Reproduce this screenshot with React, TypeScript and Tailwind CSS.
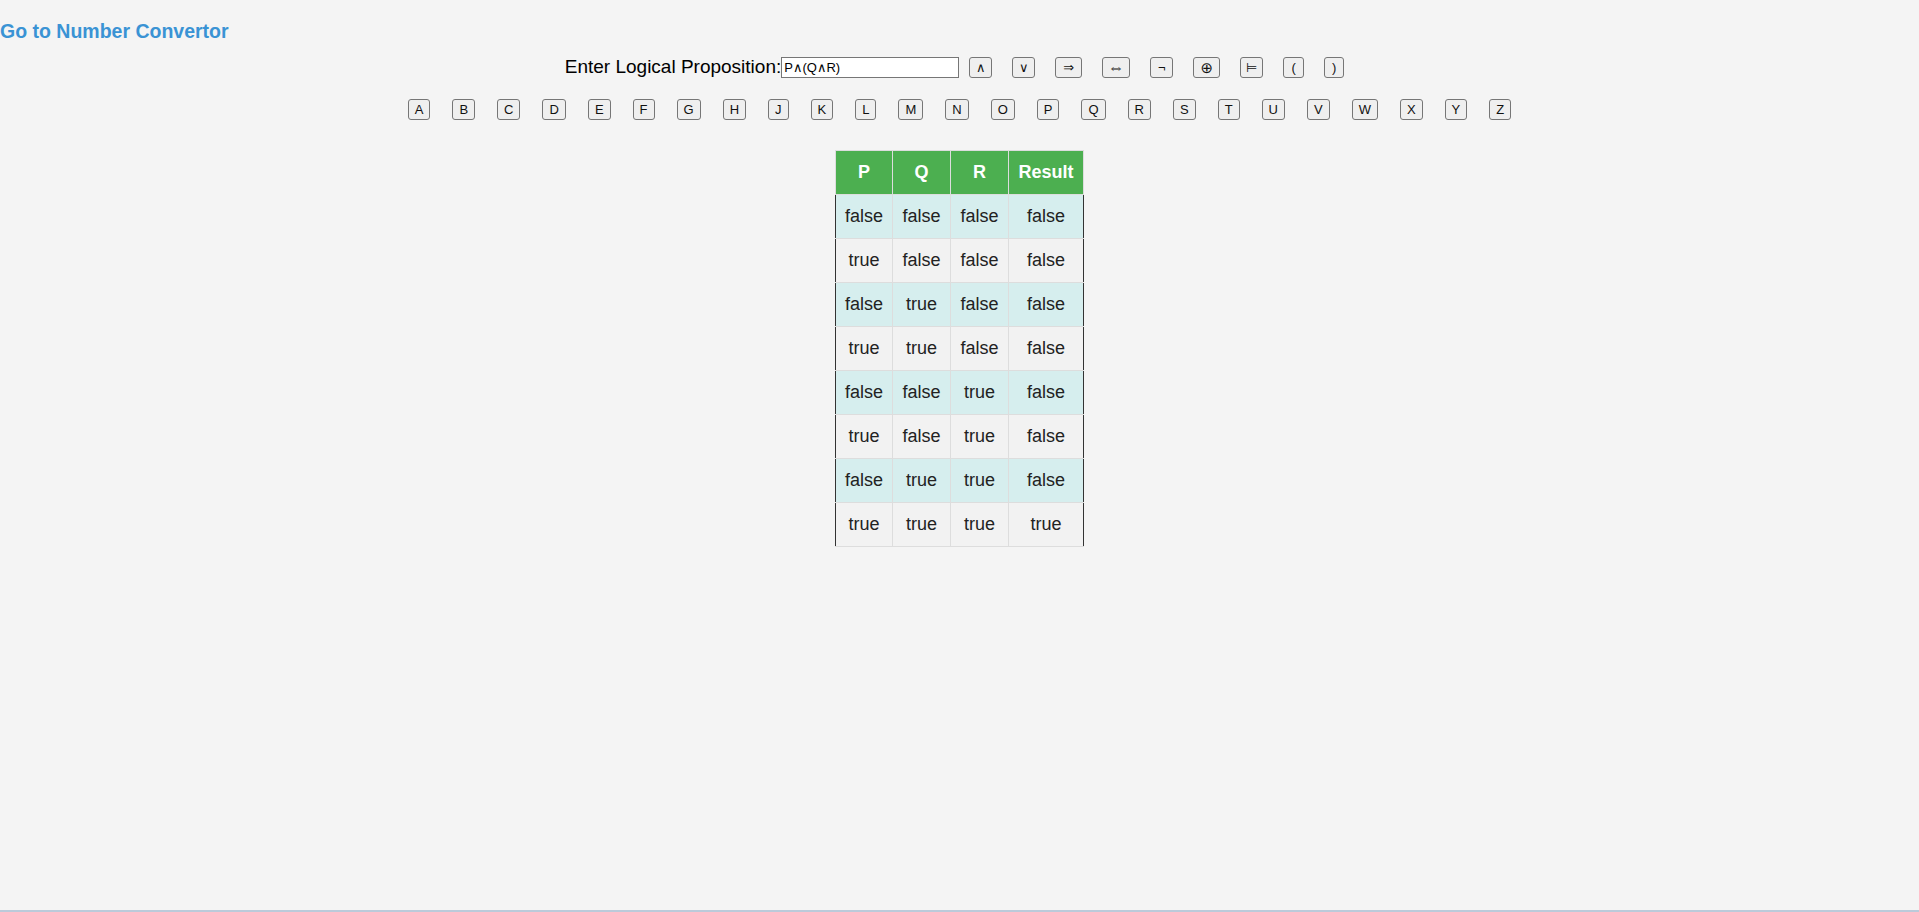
import React from 'react';

// symbol keys with the widths they take in the original
const operators: { sym: string; w: string }[] = [
    { sym: '∧', w: 'w-[23px]' },
    { sym: '∨', w: 'w-[23px]' },
    { sym: '⇒', w: 'w-[27px]' },
    { sym: '⇔', w: 'w-[28px] text-[17px]' },
    { sym: '¬', w: 'w-[23px]' },
    { sym: '⊕', w: 'w-[27px] text-[15px]' },
    { sym: '⊨', w: 'w-[23px]' },
    { sym: '(', w: 'w-[21px]' },
    { sym: ')', w: 'w-[20px]' },
];
const letters = 'ABCDEFGHJKLMNOPQRSTUVWXYZ'.split('');

const rows: boolean[][] = [
    [false, false, false, false],
    [true, false, false, false],
    [false, true, false, false],
    [true, true, false, false],
    [false, false, true, false],
    [true, false, true, false],
    [false, true, true, false],
    [true, true, true, true],
];

function KeyButton({ label, className }: { label: string; className: string }) {
    return (
        <button
            type="button"
            className={`h-[21px] flex items-center justify-center border border-[#767676] rounded-[3px] bg-[#efefef] text-[13px] leading-none text-[#111] font-['Liberation_Sans','DejaVu_Sans',sans-serif] ${className}`}
        >
            {label}
        </button>
    );
}

export default function App() {
    return (
        <div className="h-[912px] flex flex-col bg-[#f4f4f4] font-['Liberation_Sans',Arial,sans-serif] text-[#222]">
            <div className="pt-[20px]">
                <a href="#" className="text-[19.5px] leading-[22px] font-bold text-[#3a93d4] no-underline">
                    Go to Number Convertor
                </a>
            </div>

            {/* proposition input + operator keys */}
            <div className="mt-[11px] flex items-center justify-center h-[22px]">
                <label className="text-[19px] leading-[22px] text-black">Enter Logical Proposition:</label>
                <input
                    type="text"
                    defaultValue="P∧(Q∧R)"
                    className="w-[178px] h-[21px] px-[2px] border border-[#767676] bg-white text-[13px] text-black outline-none font-['Liberation_Sans','DejaVu_Sans',sans-serif]"
                />
                {operators.map((op) => (
                    <KeyButton key={op.sym} label={op.sym} className={`mx-[10px] font-['DejaVu_Sans',sans-serif] ${op.w}`} />
                ))}
            </div>

            {/* variable keys */}
            <div className="mt-[21px] flex items-center justify-center h-[21px]">
                {letters.map((l) => (
                    <KeyButton key={l} label={l} className="mx-[11px] px-[6px]" />
                ))}
            </div>

            <div className="mt-[30px] flex justify-center">
                <table className="border-collapse text-[18px]">
                    <thead>
                        <tr className="bg-[#4caf50] text-white h-[44px]">
                            {['P', 'Q', 'R', 'Result'].map((h, i) => (
                                <th
                                    key={h}
                                    className={`font-bold px-[8px] border border-[#ddd] ${
                                        i === 3 ? 'w-[75px]' : i === 0 ? 'w-[57px]' : 'w-[58px]'
                                    }`}
                                >
                                    {h}
                                </th>
                            ))}
                        </tr>
                    </thead>
                    <tbody>
                        {rows.map((r, ri) => (
                            <tr key={ri} className={`h-[44px] ${ri % 2 === 0 ? 'bg-[#d6eeee]' : 'bg-[#f2f2f2]'}`}>
                                {r.map((v, ci) => (
                                    <td
                                        key={ci}
                                        className={`text-center px-[8px] border border-[#ddd] ${
                                            ci === 0 ? 'border-l-[#333]' : ''
                                        } ${ci === 3 ? 'border-r-[#333]' : ''}`}
                                    >
                                        {v ? 'true' : 'false'}
                                    </td>
                                ))}
                            </tr>
                        ))}
                    </tbody>
                </table>
            </div>

            <div className="mt-auto h-[2px] bg-[#bccada]" />
        </div>
    );
}
